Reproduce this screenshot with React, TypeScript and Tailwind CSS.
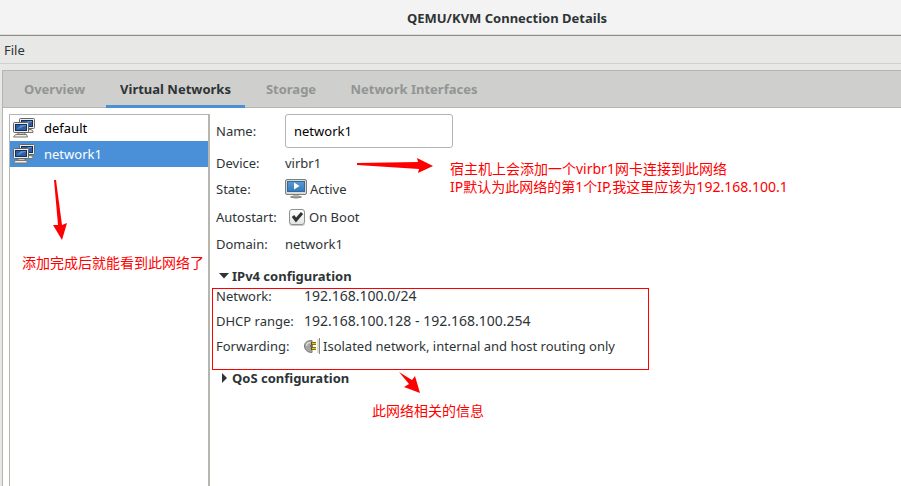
import type { ReactNode } from "react";

const tabs = [
  { name: "Overview", width: "w-[103px]" },
  { name: "Virtual Networks", width: "w-[139px]" },
  { name: "Storage", width: "w-[92px]" },
  { name: "Network Interfaces", width: "w-[154px]" },
];

function NetworkIcon() {
  return (
    <svg width="22" height="20" viewBox="0 0 22 20" aria-hidden="true">
      <path d="M9 11.5h9l2 1.5v1.5H9z" fill="#e8e8df" stroke="#77776f" />
      <rect x="6.5" y="0.5" width="15" height="10" rx="1" fill="#eeeee6" stroke="#66665e" />
      <rect x="8.5" y="2.5" width="11" height="6" fill="#2d5da3" stroke="#0d2f66" />
      <path d="M10 7l5-4h4v1c-4 0-5 3-9 3z" fill="#5f8cc8" />
      <path d="M5 14.500h7v2H5z" fill="#c5c5bb" stroke="#77776f" />
      <rect x="0.500" y="4.500" width="15" height="10" rx="1" fill="#eeeee6" stroke="#66665e" />
      <rect x="2.500" y="6.500" width="11" height="6" fill="#2d5da3" stroke="#0d2f66" />
      <path d="M4 11l4-4h5v1c-4 0-5 3-9 3z" fill="#5f8cc8" />
      <path d="M2.500 16.500h11l1 2.500H.5z" fill="#f2f2ea" stroke="#77776f" />
    </svg>
  );
}

function ActiveIcon() {
  return (
    <svg width="22" height="20" viewBox="0 0 22 20" aria-hidden="true">
      <defs>
        <linearGradient id="screen" x1="0" y1="0" x2="0" y2="1">
          <stop offset="0" stopColor="#5b9bd3" />
          <stop offset="1" stopColor="#3479bb" />
        </linearGradient>
      </defs>
      <ellipse cx="11" cy="18" rx="6" ry="1.500" fill="#8b8d89" />
      <path d="M8 15h6v2.500H8z" fill="#b9bbb7" />
      <rect x="0.500" y="0.500" width="21" height="15" rx="1.500" fill="#d9dbd7" stroke="#7c7e7a" />
      <rect x="2.500" y="2.500" width="17" height="10" fill="url(#screen)" stroke="#3069a4" />
      <path d="M9 3.500v7l5.500-3.500z" fill="#fff" />
    </svg>
  );
}

function PlugIcon() {
  return (
    <svg width="17" height="16" viewBox="0 0 17 16" aria-hidden="true">
      <path d="M8 2.500C3 2.500.5 4.500.5 8S3 14.500 8 14.500z" fill="#a5a5a5" stroke="#777" />
      <path d="M2.500 8c0-2 1-3.500 4-3.500" fill="none" stroke="#d6d6d6" strokeWidth="1.500" />
      <path d="M6 8h3" stroke="#444" />
      <path d="M7 5.500h5M7 10.500h5" stroke="#665500" strokeWidth="3" />
      <path d="M8 5.500h4M8 10.500h4" stroke="#e6c229" strokeWidth="1.500" />
      <path d="M13 1h2v14h-2z" fill="#deded9" />
      <path d="M15.500 0v16" stroke="#8a8a84" />
    </svg>
  );
}

function Row({ label, height, labelWidth, children }: { label: string; height: string; labelWidth: string; children: ReactNode }) {
  return (
    <div className={`flex items-center ${height}`}>
      <dt className={`shrink-0 ${labelWidth}`}>{label}</dt>
      <dd className="flex items-center">{children}</dd>
    </div>
  );
}

export default function App() {
  return (
    <div className="flex min-h-screen flex-col bg-[#e8e8e6] font-['Noto_Sans','Noto_Sans_CJK_SC',sans-serif] text-[13px] leading-4 text-[#2e3436]">
      <header className="flex h-9 items-center justify-center border-b border-[#8c8d87] bg-[#f3f3f3] pl-[113px] shadow-[inset_0_-1px_0_#dededc]">
        <h1 className="font-bold">QEMU/KVM Connection Details</h1>
      </header>
      <nav className="flex h-7 items-center border-b border-[#d0d0cf]" aria-label="Menu">
        <button className="px-1">File</button>
      </nav>

      <main className="mt-1.5 ml-0.5 flex grow flex-col border-t border-l border-[#b4b4b1] bg-white">
        <div role="tablist" className="flex h-[37px] border-b border-[#b4b4b1] bg-[#cfcfcd]">
          {tabs.map((tab, i) => (
            <button
              key={tab.name}
              role="tab"
              aria-selected={i === 1}
              className={`${tab.width} -mb-px border-b-[3px] pt-0.5 font-bold ${
                i === 1 ? "border-[#4a90d9] text-[#2e3436]" : "border-transparent text-[#929595]"
              }`}
            >
              {tab.name}
            </button>
          ))}
        </div>

        <div className="flex grow pt-1.5 pl-1.5">
          <section className="relative w-[201px] shrink-0 border-t border-r-2 border-l border-[#b6b6b0]" aria-label="Networks">
            <button className="flex h-[26px] w-full items-center gap-[9px] pl-[3px] text-black">
              <NetworkIcon />
              default
            </button>
            <button className="flex h-[26px] w-full items-center gap-[9px] bg-[#4a90d9] pl-[3px] text-white">
              <NetworkIcon />
              network1
            </button>
            <svg className="absolute top-16 left-10" width="20" height="62" viewBox="0 0 20 62" aria-hidden="true">
              <path d="M4 1h2l6 45 5-2-5 17-9-15 5 0z" fill="#f00" />
            </svg>
            <p className="absolute top-[138px] left-3 text-sm leading-5 whitespace-nowrap text-[#f00]">添加完成后就能看到此网络了</p>
          </section>

          <section className="relative grow pl-1.5" aria-label="Network details">
            <div className="flex items-center">
              <label htmlFor="name" className="w-[69px]">Name:</label>
              <input id="name" defaultValue="network1" className="h-[34px] w-[168px] rounded-[3px] border border-[#b4b4b1] bg-white px-2 text-black" />
            </div>
            <dl className="mt-0.5">
              <Row label="Device:" height="h-[26px]" labelWidth="w-[69px]">virbr1</Row>
              <Row label="State:" height="h-[26px]" labelWidth="w-[69px]">
                <ActiveIcon />
                <span className="pl-[3px]">Active</span>
              </Row>
              <Row label="Autostart:" height="h-[30px]" labelWidth="w-[69px]">
                <label className="flex items-center pl-1">
                  <span className="relative flex">
                    <input type="checkbox" defaultChecked className="peer h-4 w-4 appearance-none rounded-[3px] border border-[#8f918d] bg-linear-to-b from-white to-[#e4e4e2] shadow-[0_1px_0_#c8c8c6]" />
                    <svg className="pointer-events-none absolute inset-0 hidden peer-checked:block" width="16" height="16" viewBox="0 0 16 16" aria-hidden="true">
                      <path d="M4 7l3 4 6-7" fill="none" stroke="#2e3436" strokeWidth="3" />
                    </svg>
                  </span>
                  <span className="pl-1">On Boot</span>
                </label>
              </Row>
              <Row label="Domain:" height="h-6" labelWidth="w-[69px]">network1</Row>
            </dl>

            <button className="mt-3 flex h-4 items-center gap-[3px] pl-[3px] font-bold" aria-expanded="true">
              <svg width="10" height="6" viewBox="0 0 10 6" aria-hidden="true"><path d="M0 0h10L5 5.500z" fill="#2e3436" /></svg>
              IPv4 configuration
            </button>
            <dl className="-mt-px">
              <Row label="Network:" height="h-[25px]" labelWidth="w-[88px]">
                <span className="text-sm leading-4">192.168.100.0/24</span>
              </Row>
              <Row label="DHCP range:" height="h-[25px]" labelWidth="w-[88px]">
                <span className="text-sm leading-4">192.168.100.128 - 192.168.100.254</span>
              </Row>
              <Row label="Forwarding:" height="h-[25px]" labelWidth="w-[88px]">
                <PlugIcon />
                <span className="pl-0.5">Isolated network, internal and host routing only</span>
              </Row>
            </dl>
            <button className="mt-3 flex h-4 items-center gap-[3px] pl-[3px] font-bold" aria-expanded="false">
              <svg width="10" height="10" viewBox="0 0 10 10" aria-hidden="true"><path d="M3 0v10l5-5z" fill="#2e3436" /></svg>
              QoS configuration
            </button>

            <div className="pointer-events-none absolute top-[174px] left-0.5 h-[82px] w-[437px] border border-[#f00]" />
            <svg className="absolute top-11 left-[146px]" width="78" height="16" viewBox="0 0 78 16" aria-hidden="true">
              <path d="M1 5l61-1-1-4 16 8-15 7 1-4L1 7z" fill="#f00" />
            </svg>
            <p className="absolute top-[46px] left-60 text-sm leading-[18px] whitespace-nowrap text-[#f00]">
              宿主机上会添加一个virbr1网卡连接到此网络<br />
              IP默认为此网络的第1个IP,我这里应该为192.168.100.1
            </p>
            <svg className="absolute top-[257px] left-[188px]" width="24" height="24" viewBox="0 0 24 24" aria-hidden="true">
              <path d="M1 1l13 8 3-4 5 17-16-6 5-3z" fill="#f00" />
            </svg>
            <p className="absolute top-[287px] left-[162px] text-sm leading-5 whitespace-nowrap text-[#f00]">此网络相关的信息</p>
          </section>
        </div>
      </main>
    </div>
  );
}
